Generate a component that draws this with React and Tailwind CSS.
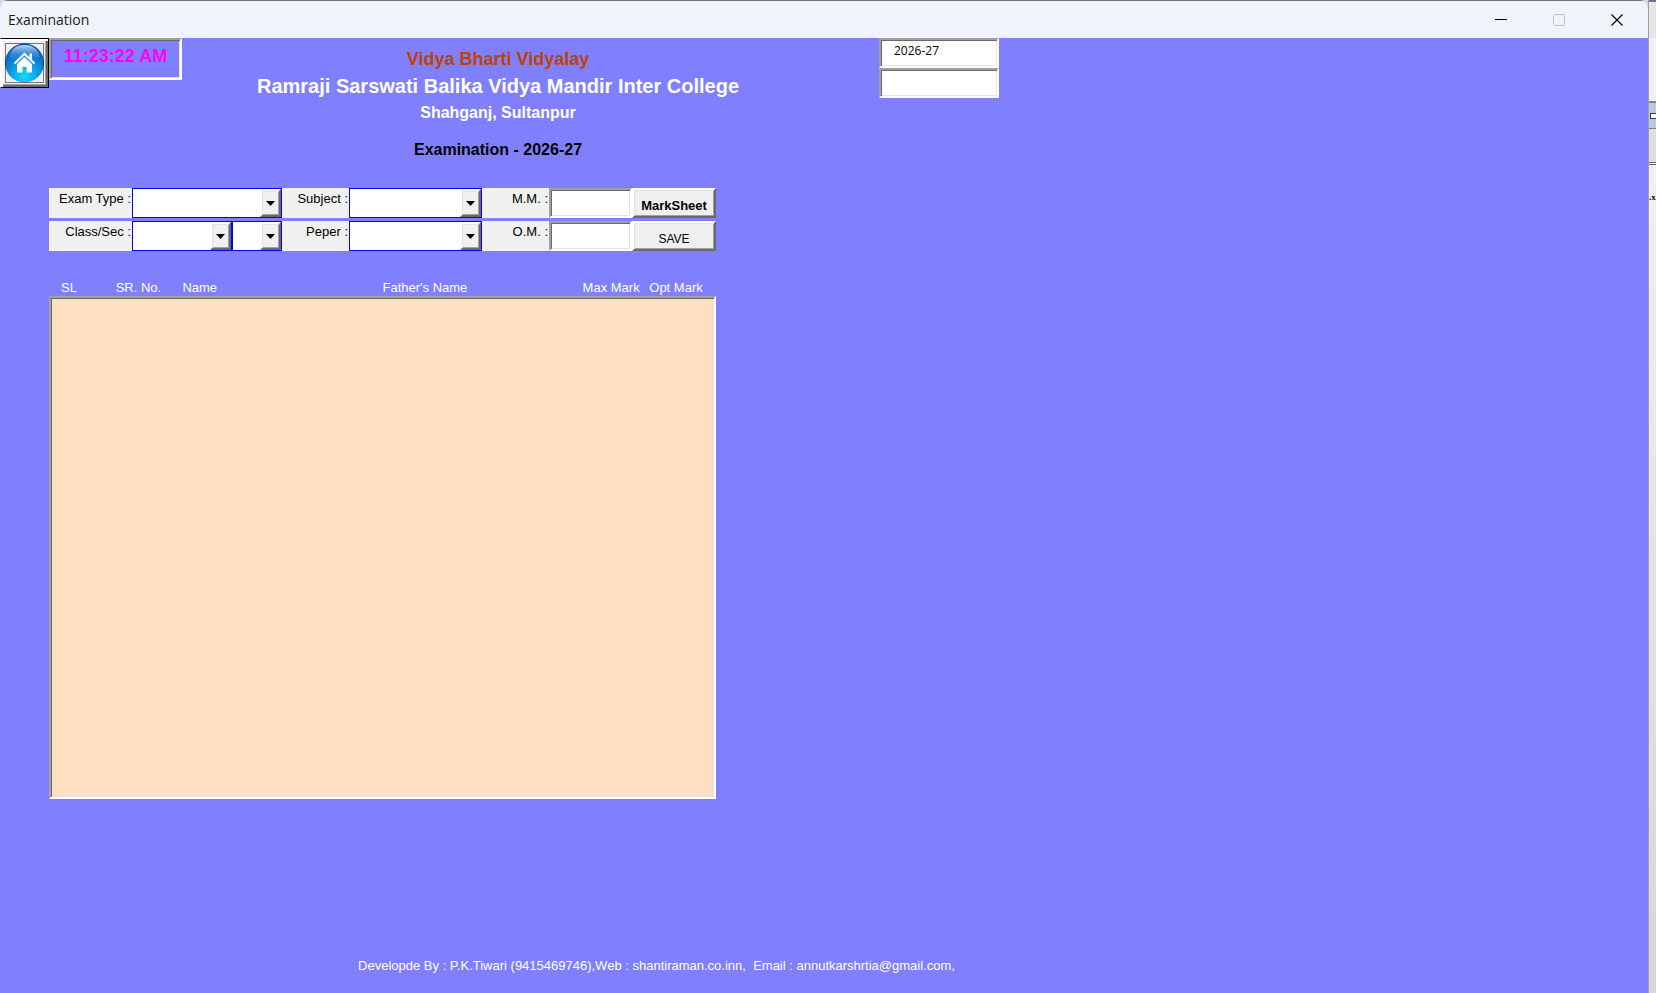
import React from "react";

const sunken =
  "border-2 border-t-[#a0a0a0] border-l-[#a0a0a0] border-r-white border-b-white shadow-[inset_1px_1px_#696969,inset_-1px_-1px_#e3e3e3]";

const raised =
  "border-2 border-t-white border-l-white border-r-[#696969] border-b-[#696969] bg-[#f0f0f0] shadow-[inset_1px_1px_#e3e3e3,inset_-1px_-1px_#a0a0a0]";

const columns = [
  { label: "SL", className: "w-[10%] pl-3" },
  { label: "SR. No.", className: "w-[10%]" },
  { label: "Name", className: "w-[30%]" },
  { label: "Father's Name", className: "w-[30%]" },
  { label: "Max Mark", className: "w-[10%]" },
  { label: "Opt Mark", className: "w-[10%]" },
];

function TitleBar() {
  return (
    <header className="flex h-[38px] items-center border-t border-[#6b7588] bg-[#f0f3f9] pr-0.5 pl-2 font-['Open_Sans','Noto_Sans',sans-serif]">
      <h1 className="grow text-sm text-[#1a1a1a]">Examination</h1>
      <button type="button" aria-label="Minimize" className="flex h-full w-[58px] items-center justify-center">
        <svg width="12" height="12" viewBox="0 0 12 12">
          <path d="M0 5.5h12" stroke="#000" />
        </svg>
      </button>
      <button type="button" aria-label="Maximize" disabled className="flex h-full w-[58px] items-center justify-center">
        <svg width="12" height="12" viewBox="0 0 12 12">
          <rect x="0.5" y="0.5" width="11" height="11" rx="1" fill="none" stroke="#c0c3c9" />
        </svg>
      </button>
      <button type="button" aria-label="Close" className="flex h-full w-[58px] items-center justify-center">
        <svg width="12" height="12" viewBox="0 0 12 12">
          <path d="M0.5 0.5l11 11M11.5 0.5l-11 11" stroke="#000" strokeWidth="1.2" />
        </svg>
      </button>
    </header>
  );
}

function HomeButton() {
  return (
    <button
      type="button"
      aria-label="Home"
      className="h-[50px] w-[49px] shrink-0 border border-black border-l-white bg-[#f0f0f0] p-[3px] shadow-[inset_2px_2px_#fff,inset_-2px_-2px_#696969,inset_-3px_-3px_#a0a0a0]"
    >
      <svg viewBox="0 0 41 42" className="h-full w-full">
        <defs>
          <radialGradient id="ball" cx="0.5" cy="0.85" r="0.8">
            <stop offset="0" stopColor="#12dcff" />
            <stop offset="0.45" stopColor="#0c9ce6" />
            <stop offset="1" stopColor="#0b4fb4" />
          </radialGradient>
          <linearGradient id="gloss" x1="0" y1="0" x2="0" y2="1">
            <stop offset="0" stopColor="#d4e8fa" stopOpacity="0.9" />
            <stop offset="1" stopColor="#3f8edc" stopOpacity="0.2" />
          </linearGradient>
        </defs>
        <circle cx="20.5" cy="21" r="19.5" fill="url(#ball)" />
        <path d="M5 15C7 6 13 3 20.5 3S34 6 36 15C30 19 24 16 20 16S10 19 5 15z" fill="url(#gloss)" />
        <path d="M10.5 21.500l10-9.500 10 9.500" fill="none" stroke="#fff" strokeWidth="2" />
        <path d="M25.500 11.500h2.500v7l-2.500-2.300z" fill="#fff" />
        <path d="M20.500 15L13 22v8.500h5.500V25h4v5.500H28V22z" fill="#fff" />
        <rect x="1.5" y="1.5" width="38" height="39" fill="none" stroke="#000" strokeDasharray="1 1" />
      </svg>
    </button>
  );
}

function Label({ htmlFor, children }) {
  return (
    <label
      htmlFor={htmlFor}
      className="bg-[#f0f0f0] pt-0.5 pr-px text-right text-[13px] leading-[18px] whitespace-nowrap text-black"
    >
      {children}
    </label>
  );
}

function Combo({ id, label, className = "" }) {
  return (
    <div className={`relative h-[30px] min-w-0 ${className}`}>
      <select
        id={id}
        aria-label={label}
        defaultValue=""
        className="h-full w-full appearance-none border border-[#0000ff] bg-white px-1 text-[13px] outline-none"
      >
        <option value=""></option>
      </select>
      <span
        className={`pointer-events-none absolute inset-y-px right-px flex w-[21px] items-center justify-center ${raised}`}
      >
        <svg width="9" height="5" viewBox="0 0 9 5">
          <path d="M0 0h9L4.5 5z" fill="#000" />
        </svg>
      </span>
    </div>
  );
}

function ExamForm() {
  return (
    <form
      className="grid max-w-[667px] grid-cols-[83fr_150fr_67fr_133fr_67fr_83fr_84fr] gap-y-[3px]"
      onSubmit={(e) => e.preventDefault()}
    >
      <Label htmlFor="examType">Exam Type :</Label>
      <Combo id="examType" />
      <Label htmlFor="subject">Subject :</Label>
      <Combo id="subject" />
      <Label htmlFor="mm">M.M. :</Label>
      <input id="mm" className={`h-[30px] min-w-0 bg-white px-1 text-[13px] ${sunken}`} />
      <button type="button" className={`h-[30px] pt-1.5 text-[13px] leading-5 font-bold ${raised}`}>
        MarkSheet
      </button>

      <Label htmlFor="classSec">Class/Sec :</Label>
      <div className="flex">
        <Combo id="classSec" className="w-2/3" />
        <Combo id="section" label="Section" className="w-1/3" />
      </div>
      <Label htmlFor="peper">Peper :</Label>
      <Combo id="peper" />
      <Label htmlFor="om">O.M. :</Label>
      <input id="om" className={`h-[30px] min-w-0 bg-white px-1 text-[13px] ${sunken}`} />
      <button type="submit" className={`h-[30px] pt-1.5 text-xs leading-5 ${raised}`}>
        SAVE
      </button>
    </form>
  );
}

function StudentTable() {
  return (
    <table className="mt-7 w-full max-w-[667px] table-fixed border-separate border-spacing-0 text-[13px] text-white">
      <thead>
        <tr>
          {columns.map((col) => (
            <th key={col.label} className={`h-[17px] p-0 text-left leading-[17px] font-normal whitespace-nowrap ${col.className}`}>
              {col.label}
            </th>
          ))}
        </tr>
      </thead>
      <tbody>
        <tr>
          <td colSpan={6} className={`h-[503px] bg-[#ffdfc1] p-0 ${sunken}`}></td>
        </tr>
      </tbody>
    </table>
  );
}

// strip of the window behind, seen past the right edge
function BackWindow() {
  return (
    <aside className="flex w-2 shrink-0 flex-col overflow-hidden border-l border-[#a0a0a0] bg-[#dcdcdc]">
      <div className="h-[2px] bg-[#6b7588]" />
      <div className="h-9 bg-[#e6e6e6]" />
      <div className="h-[63px] bg-[#f0f0f0]" />
      <div className="flex h-7 flex-col justify-center border-t-2 border-b border-[#7c858e] bg-[#bccbdb]">
        <div className="ml-px h-[6px] border border-r-0 border-[#33383e] bg-white" />
      </div>
      <div className="h-[33px] bg-[#dedede]" />
      <div className="h-[3px] border-y border-[#696969] bg-white" />
      <div className="flex grow flex-col bg-linear-to-b from-[#f0f0f0] to-[#d6d6d6] pt-6 font-['Liberation_Serif',serif] text-[9px] leading-4 font-bold text-black">
        .x
      </div>
    </aside>
  );
}

export default function App() {
  return (
    <div className="flex min-h-screen bg-[#dcdcdc]">
      <div className="flex min-w-0 grow flex-col overflow-hidden rounded-t-lg bg-[#8080ff]">
        <TitleBar />
        <main className="flex grow flex-col font-['Liberation_Sans',Arial,sans-serif]">
          <div className="flex h-[150px] items-start">
            <HomeButton />
            <time className={`h-[42px] w-[133px] shrink-0 text-center text-lg leading-8 font-bold text-[#ff00ff] ${sunken}`}>
              11:23:22 AM
            </time>
            <div className="w-full max-w-[632px] pt-2 text-center font-bold whitespace-nowrap">
              <p className="text-lg leading-[26px] text-[#c04000]">Vidya Bharti Vidyalay</p>
              <h2 className="text-xl leading-[28px] text-white">Ramraji Sarswati Balika Vidya Mandir Inter College</h2>
              <p className="text-base leading-[26px] text-white">Shahganj, Sultanpur</p>
              <p className="mt-3 text-base leading-[24px] text-black">Examination - 2026-27</p>
            </div>
            <div className="ml-[65px] flex w-[120px] shrink-0 flex-col font-['Open_Sans','Noto_Sans',sans-serif] text-xs">
              <input aria-label="Session" defaultValue="2026-27" className={`h-[30px] w-full bg-white pb-1.5 pl-[13px] ${sunken}`} />
              <input aria-label="Code" className={`h-[30px] w-full bg-white pl-[13px] ${sunken}`} />
            </div>
          </div>
          <div className="px-[49px]">
            <ExamForm />
            <StudentTable />
          </div>
          <footer className="mt-auto max-w-[1313px] pb-4 text-center text-[13px] leading-[22px] whitespace-pre text-white">
            {"Developde By : P.K.Tiwari (9415469746),Web : shantiraman.co.inn,  Email : annutkarshrtia@gmail.com,"}
          </footer>
        </main>
      </div>
      <BackWindow />
    </div>
  );
}
